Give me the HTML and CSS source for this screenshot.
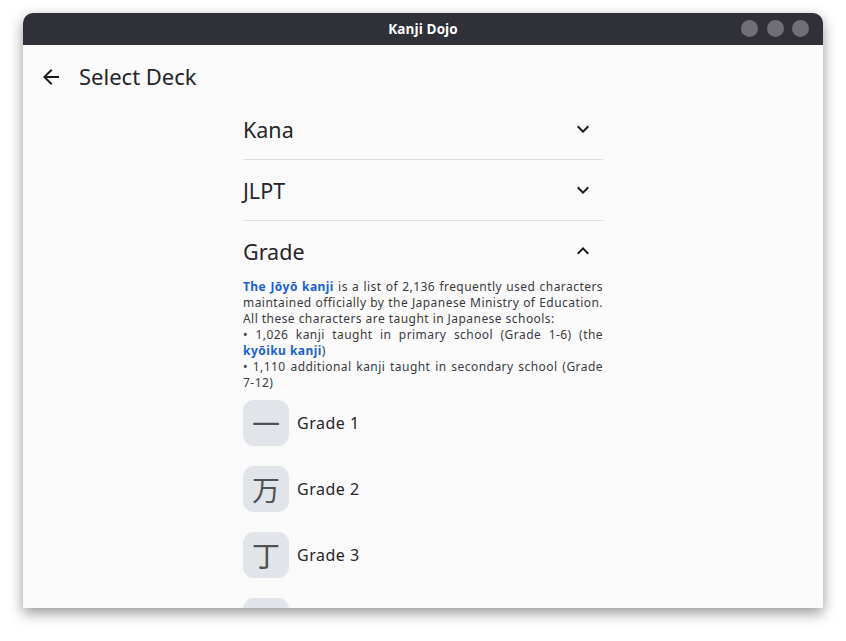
FILE: index.html
```html
<!DOCTYPE html>
<html>
<head>
<meta charset="utf-8">
<link rel="stylesheet" href="styles.css">
</head>
<body>
<div class="window">
  <div class="titlebar">
    <span class="title">Kanji Dojo</span>
    <div class="controls"><span class="dot"></span><span class="dot"></span><span class="dot"></span></div>
  </div>
  <div class="content">
    <div class="toolbar">
      <svg class="back" viewBox="0 0 24 24" width="24" height="24"><path d="M20 11H7.83l5.59-5.59L12 4l-8 8 8 8 1.41-1.41L7.83 13H20v-2z" fill="#1d1b20"/></svg>
      <span class="toolbar-title">Select Deck</span>
    </div>
    <div class="list">
      <div class="section">
        <div class="header"><span class="htitle">Kana</span><svg class="chev" viewBox="0 0 24 24" width="24" height="24"><path d="M16.59 8.59L12 13.17 7.41 8.59 6 10l6 6 6-6z" fill="#1d1b20"/></svg></div>
      </div>
      <div class="section">
        <div class="header"><span class="htitle">JLPT</span><svg class="chev" viewBox="0 0 24 24" width="24" height="24"><path d="M16.59 8.59L12 13.17 7.41 8.59 6 10l6 6 6-6z" fill="#1d1b20"/></svg></div>
      </div>
      <div class="section open">
        <div class="header"><span class="htitle">Grade</span><svg class="chev" viewBox="0 0 24 24" width="24" height="24"><path d="M12 8l-6 6 1.41 1.41L12 10.83l4.59 4.58L18 14z" fill="#1d1b20"/></svg></div>
        <p class="desc"><b class="link">The Jōyō kanji</b> is a list of 2,136 frequently used characters maintained officially by the Japanese Ministry of Education. All these characters are taught in Japanese schools:<br>• 1,026 kanji taught in primary school (Grade 1-6) (the <b class="link">kyōiku kanji</b>)<br>• 1,110 additional kanji taught in secondary school (Grade 7-12)</p>
        <div class="decks">
          <div class="deck"><span class="kbox">一</span><span class="dlabel">Grade 1</span></div>
          <div class="deck"><span class="kbox">万</span><span class="dlabel">Grade 2</span></div>
          <div class="deck"><span class="kbox">丁</span><span class="dlabel">Grade 3</span></div>
          <div class="deck"><span class="kbox">丑</span><span class="dlabel">Grade 4</span></div>
        </div>
      </div>
    </div>
  </div>
</div>
</body>
</html>
```

FILE: styles.css
```css
html, body {
  margin: 0;
  padding: 0;
  background: #ffffff;
}
body {
  width: 846px;
  height: 641px;
  overflow: hidden;
  padding-top: 13px;
  padding-left: 23px;
  box-sizing: border-box;
  font-family: "Noto Sans", "Noto Sans CJK JP", sans-serif;
}
.window {
  width: 800px;
  height: 595px;
  border-radius: 10px 10px 0 0;
  overflow: hidden;
  box-shadow: 0 5px 14px rgba(0, 0, 0, 0.42);
  display: flex;
  flex-direction: column;
  background: #fafafa;
}
.titlebar {
  height: 32px;
  flex: 0 0 32px;
  background: #303038;
  position: relative;
  display: flex;
  align-items: center;
  justify-content: center;
}
.title {
  color: #ffffff;
  font-family: "Open Sans", "Noto Sans", sans-serif;
  font-weight: 700;
  font-size: 13.5px;
  letter-spacing: 0.1px;
}
.controls {
  position: absolute;
  right: 14px;
  top: 7px;
  display: flex;
  gap: 8.5px;
}
.dot {
  width: 17px;
  height: 17px;
  border-radius: 50%;
  background: #6f6f75;
}
.content {
  flex: 1;
  overflow: hidden;
  background: #fafafa;
}
.toolbar {
  height: 64px;
  margin-bottom: -10px;
  display: flex;
  align-items: center;
  padding-left: 16px;
  gap: 16px;
}
.back {
  display: block;
}
.toolbar-title {
  font-size: 22px;
  color: #26252a;
  position: relative;
  top: -1px;
}
.list {
  width: 360px;
  margin: 0 auto;
}
.section {
  border-bottom: 1px solid #e0e0e0;
}
.section.open {
  border-bottom: none;
}
.header {
  height: 60px;
  display: flex;
  align-items: center;
  justify-content: space-between;
}
.htitle {
  font-size: 21.5px;
  color: #26252a;
}
.chev {
  display: block;
  margin-right: 8px;
}
.desc {
  margin: -2px 0 0 0;
  font-size: 12px;
  line-height: 16px;
  letter-spacing: 0.45px;
  color: #3a3a3e;
  text-align: justify;
}
.link {
  color: #1b5fd6;
  font-weight: 700;
}
.decks {
  display: flex;
  flex-direction: column;
  gap: 20px;
  padding-top: 9px;
}
.deck {
  display: flex;
  align-items: center;
  gap: 8px;
}
.kbox {
  width: 46px;
  height: 46px;
  border-radius: 11px;
  background: #e1e4e8;
  display: flex;
  align-items: center;
  justify-content: center;
  font-family: "Noto Sans CJK JP", sans-serif;
  font-size: 28px;
  color: #505156;
}
.dlabel {
  font-size: 16px;
  letter-spacing: 0.5px;
  color: #26252a;
}
```
